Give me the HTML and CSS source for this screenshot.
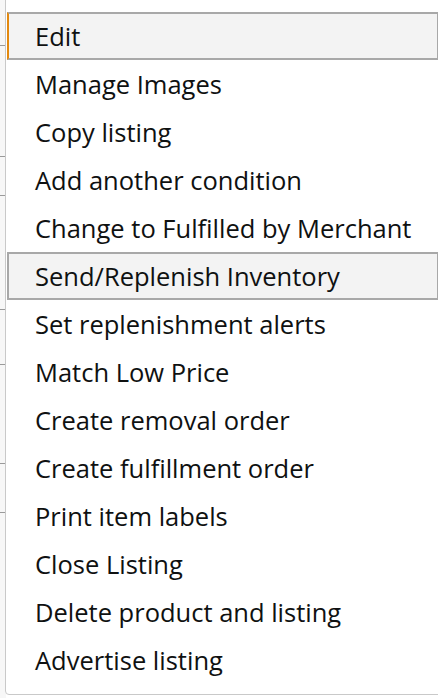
FILE: index.html
```html
<!DOCTYPE html>
<html>
<head>
<meta charset="utf-8">
<link rel="stylesheet" href="styles.css">
</head>
<body>
<div class="page">
  <div class="backdrop">
    <span class="rule r1"></span>
    <span class="rule r2"></span>
    <span class="rule r3"></span>
    <span class="rule r4"></span>
    <span class="rule r5"></span>
    <span class="rule r6"></span>
    <span class="rule r7"></span>
  </div>
  <ul class="menu">
    <li class="item active focus">Edit</li>
    <li class="item">Manage Images</li>
    <li class="item">Copy listing</li>
    <li class="item">Add another condition</li>
    <li class="item">Change to Fulfilled by Merchant</li>
    <li class="item active">Send/Replenish Inventory</li>
    <li class="item">Set replenishment alerts</li>
    <li class="item">Match Low Price</li>
    <li class="item">Create removal order</li>
    <li class="item">Create fulfillment order</li>
    <li class="item">Print item labels</li>
    <li class="item">Close Listing</li>
    <li class="item">Delete product and listing</li>
    <li class="item">Advertise listing</li>
  </ul>
</div>
</body>
</html>
```
FILE: styles.css
```css
html, body {
  margin: 0;
  padding: 0;
  background: #ffffff;
  overflow: hidden;
}
.page {
  width: 438px;
  height: 698px;
  position: relative;
  overflow: hidden;
}
.backdrop {
  position: absolute;
  left: 0;
  top: 0;
  width: 6px;
  height: 698px;
  background: #f7f7f7;
}
.rule {
  position: absolute;
  left: 0;
  width: 6px;
  height: 1px;
  background: #9a9a9a;
}
.r1 { top: 45px; }
.r2 { top: 156px; }
.r3 { top: 195px; }
.r4 { top: 309px; }
.r5 { top: 364px; }
.r6 { top: 463px; }
.r7 { top: 512px; }
.menu {
  position: absolute;
  left: 5px;
  top: -4px;
  width: 460px;
  height: 699px;
  box-sizing: border-box;
  margin: 0;
  padding: 15px 0 0 0;
  list-style: none;
  background: #ffffff;
  border: 1px solid #c9c9c9;
  border-radius: 4px;
}
.item {
  height: 48px;
  box-sizing: border-box;
  padding-left: 26px;
  border: 2px solid transparent;
  margin-left: 1px;
  width: 432px;
  display: flex;
  align-items: center;
  font-family: "Open Sans", "Noto Sans", sans-serif;
  font-size: 25.5px;
  color: #0f1111;
  white-space: nowrap;
}
.item.active {
  background: #f3f3f3;
  border-color: #a8a8a8;
}
.item.focus {
  border-left-color: #e3890f;
}
```
